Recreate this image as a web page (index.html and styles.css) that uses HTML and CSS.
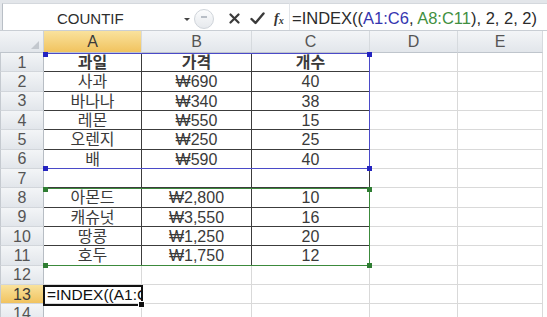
FILE: index.html
```html
<!DOCTYPE html>
<html lang="ko">
<head>
<meta charset="utf-8">
<link rel="stylesheet" href="styles.css">
</head>
<body>
<div class="app">
  <div class="fbar">
    <div class="namebox">
      <span class="name">COUNTIF</span>
      <span class="arrow"></span>
    </div>
    <div class="btns">
      <span class="grip"><span class="grip-dash"></span></span>
      <svg class="ico-x" width="11" height="11" viewBox="0 0 11 11"><path d="M1.5 1.5 L9.5 9.5 M9.5 1.5 L1.5 9.5" stroke="#3a3a3a" stroke-width="2.2" stroke-linecap="round"/></svg>
      <svg class="ico-ok" width="15" height="13" viewBox="0 0 15 13"><path d="M1.5 7 L5.5 11 L13.5 1.5" fill="none" stroke="#3a3a3a" stroke-width="2.4" stroke-linecap="round" stroke-linejoin="round"/></svg>
      <span class="fx">f<span class="fx-x">x</span></span>
    </div>
    <div class="formula">=INDEX((<span class="ref-blue">A1:C6</span>, <span class="ref-green">A8:C11</span>), 2, 2, 2)</div>
  </div>

  <div class="sheet">
    <div class="hd corner"><span class="tri"></span></div>
    <div class="hd col sel">A</div>
    <div class="hd col">B</div>
    <div class="hd col">C</div>
    <div class="hd col">D</div>
    <div class="hd col">E</div>
    <div class="edge"></div>

    <div class="hd row">1</div>
    <div class="c d b">과일</div><div class="c d b">가격</div><div class="c d b">개수</div><div class="c"></div><div class="c"></div><div class="edge"></div>

    <div class="hd row">2</div>
    <div class="c d">사과</div><div class="c d">₩690</div><div class="c d">40</div><div class="c"></div><div class="c"></div><div class="edge"></div>

    <div class="hd row">3</div>
    <div class="c d">바나나</div><div class="c d">₩340</div><div class="c d">38</div><div class="c"></div><div class="c"></div><div class="edge"></div>

    <div class="hd row">4</div>
    <div class="c d">레몬</div><div class="c d">₩550</div><div class="c d">15</div><div class="c"></div><div class="c"></div><div class="edge"></div>

    <div class="hd row">5</div>
    <div class="c d">오렌지</div><div class="c d">₩250</div><div class="c d">25</div><div class="c"></div><div class="c"></div><div class="edge"></div>

    <div class="hd row">6</div>
    <div class="c d">배</div><div class="c d">₩590</div><div class="c d">40</div><div class="c"></div><div class="c"></div><div class="edge"></div>

    <div class="hd row">7</div>
    <div class="c d"></div><div class="c d"></div><div class="c d"></div><div class="c"></div><div class="c"></div><div class="edge"></div>

    <div class="hd row">8</div>
    <div class="c d">아몬드</div><div class="c d">₩2,800</div><div class="c d">10</div><div class="c"></div><div class="c"></div><div class="edge"></div>

    <div class="hd row">9</div>
    <div class="c d">캐슈넛</div><div class="c d">₩3,550</div><div class="c d">16</div><div class="c"></div><div class="c"></div><div class="edge"></div>

    <div class="hd row">10</div>
    <div class="c d">땅콩</div><div class="c d">₩1,250</div><div class="c d">20</div><div class="c"></div><div class="c"></div><div class="edge"></div>

    <div class="hd row">11</div>
    <div class="c d">호두</div><div class="c d">₩1,750</div><div class="c d">12</div><div class="c"></div><div class="c"></div><div class="edge"></div>

    <div class="hd row">12</div>
    <div class="c"></div><div class="c"></div><div class="c"></div><div class="c"></div><div class="c"></div><div class="edge"></div>

    <div class="hd row sel">13</div>
    <div class="c edit">=INDEX((A1:C6, A8:C11), 2, 2, 2)</div><div class="c"></div><div class="c"></div><div class="c"></div><div class="c"></div><div class="edge"></div>

    <div class="hd row">14</div>
    <div class="c"></div><div class="c"></div><div class="c"></div><div class="c"></div><div class="c"></div><div class="edge"></div>

    <div class="range blue">
      <span class="hdl tl"></span><span class="hdl tr"></span><span class="hdl bl"></span><span class="hdl br"></span>
    </div>
    <div class="range green">
      <span class="hdl tl"></span><span class="hdl tr"></span><span class="hdl bl"></span><span class="hdl br"></span>
    </div>
    <div class="active"><span class="fill"></span></div>
  </div>
</div>
</body>
</html>
```

FILE: styles.css
```css
html, body {
  margin: 0;
  padding: 0;
  background: #ffffff;
}
.app {
  width: 547px;
  height: 317px;
  overflow: hidden;
  font-family: "Liberation Sans", Arial, sans-serif;
}

/* ---------- formula bar ---------- */
.fbar {
  height: 31px;
  box-sizing: border-box;
  padding-top: 3px;
  background: #e3e6ea;
  border-bottom: 1px solid #c9ced4;
  display: flex;
  align-items: stretch;
}
.namebox {
  width: 191px;
  margin-left: 2px;
  background: #fff;
  border-left: 1px solid #b9bfc6;
  border-top: 1px solid #d4d8dd;
  display: flex;
  align-items: center;
  box-sizing: border-box;
  position: relative;
}
.name {
  margin-left: 54px;
  padding-top: 3px;
  font-size: 15px;
  color: #2d2d2d;
}
.arrow {
  position: absolute;
  left: 181px;
  top: 14px;
  width: 0;
  height: 0;
  border-left: 3px solid transparent;
  border-right: 3px solid transparent;
  border-top: 3px solid #444;
}
.btns {
  width: 96px;
  background: #fff;
  border-top: 1px solid #d4d8dd;
  display: flex;
  align-items: center;
  box-sizing: border-box;
  position: relative;
}
.grip {
  width: 20px;
  height: 20px;
  margin-left: 1px;
  margin-top: 3px;
  border-radius: 50%;
  border: 1px solid #cfd4da;
  background: linear-gradient(#fbfcfd, #e6e9ed);
  box-sizing: border-box;
  display: flex;
  align-items: center;
  justify-content: center;
}
.grip-dash {
  width: 6px;
  height: 2px;
  background: #b8bec6;
  margin-top: -4px;
}
.ico-x {
  margin-left: 15px;
  margin-top: 3px;
}
.ico-ok {
  margin-left: 10px;
  margin-top: 2px;
}
.fx {
  margin-left: 9px;
  margin-top: 3px;
  font-family: "Liberation Serif", serif;
  font-style: italic;
  font-weight: bold;
  font-size: 14px;
  color: #333;
}
.fx-x {
  font-size: 10px;
  position: relative;
  top: 1px;
}
.formula {
  flex: 1;
  background: #fff;
  border-top: 1px solid #d4d8dd;
  border-left: 1px solid #e2e5e9;
  font-size: 16.5px;
  color: #2b2b2b;
  padding-left: 2px;
  padding-top: 5px;
  white-space: nowrap;
  overflow: hidden;
  box-sizing: border-box;
}
.ref-blue { color: #3535b0; }
.ref-green { color: #3f8f3f; }

/* ---------- sheet grid ---------- */
.sheet {
  position: relative;
  display: grid;
  grid-template-columns: 44px 98px 110px 118px 88px 85px 4px;
  grid-template-rows: 22px repeat(14, 19.33px);
}
.hd {
  box-sizing: border-box;
  background: linear-gradient(#f3f5f7, #e2e6eb);
  color: #555;
  font-size: 16px;
  display: flex;
  align-items: center;
  justify-content: center;
  border-right: 1px solid #cdd2d8;
  border-bottom: 1px solid #bfc5cc;
}
.hd.col {
  border-right: 1px solid #d6dade;
  padding-top: 1px;
}
.hd.row {
  border-left: 1px solid #c5cad0;
  border-right: 1px solid #b7bdc4;
  border-bottom: 1px solid #d2d6db;
  padding-top: 1px;
}
.hd.sel {
  background: linear-gradient(#f9e29d, #f1c35f);
  color: #3a3a3a;
}
.hd.corner {
  position: relative;
}
.tri {
  position: absolute;
  right: 4px;
  bottom: 3px;
  width: 0;
  height: 0;
  border-left: 8px solid transparent;
  border-bottom: 8px solid #c3c8ce;
}
.edge {
  background: #fff;
}
.c {
  box-sizing: border-box;
  border-right: 1px solid #d9d9d9;
  border-bottom: 1px solid #d9d9d9;
  font-family: "Liberation Sans", "Noto Sans CJK KR", sans-serif;
  font-size: 16px;
  color: #3a3a3a;
  display: flex;
  align-items: center;
  justify-content: center;
  white-space: nowrap;
  line-height: 17px;
  padding-top: 1px;
}
.c.d {
  border-right: 1px solid #3c3c3c;
  border-bottom: 1px solid #3c3c3c;
}
.c.b {
  font-weight: bold;
}
.c.edit {
  justify-content: flex-start;
  padding-left: 3px;
  overflow: hidden;
  font-size: 15.5px;
  color: #111;
}

/* ---------- overlays ---------- */
.range {
  position: absolute;
  left: 44px;
  width: 326px;
  box-sizing: border-box;
}
.range.blue {
  top: 22px;
  height: 116px;
  border: 1px solid #4a4ac8;
  border-left-color: transparent;
}
.range.green {
  top: 157px;
  height: 78px;
  border: 1px solid #3c8a3c;
  border-left-color: transparent;
}
.hdl {
  position: absolute;
  width: 5px;
  height: 5px;
}
.blue .hdl { background: #2424c0; }
.green .hdl { background: #2e7d32; }
.hdl.tl { left: -2px; top: -2px; }
.hdl.tr { right: -3px; top: -2px; }
.hdl.bl { left: -2px; bottom: -3px; }
.hdl.br { right: -3px; bottom: -3px; }
.active {
  position: absolute;
  left: 43px;
  top: 254px;
  width: 100px;
  height: 21px;
  box-sizing: border-box;
  border: 2px solid #111;
}
.fill {
  position: absolute;
  right: -4px;
  bottom: -4px;
  width: 5px;
  height: 5px;
  background: #111;
  border: 1px solid #fff;
}
```
